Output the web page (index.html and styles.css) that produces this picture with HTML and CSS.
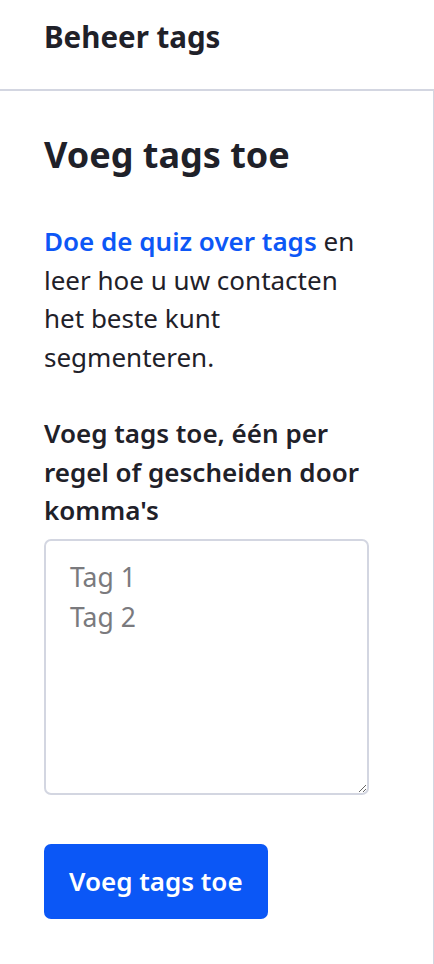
FILE: index.html
```html
<!DOCTYPE html>
<html lang="nl">
<head>
<meta charset="utf-8">
<title>Beheer tags</title>
<link rel="stylesheet" href="styles.css">
</head>
<body>
<header class="topbar">
  <h1 class="topbar-title">Beheer tags</h1>
</header>
<main class="panel">
  <h2 class="panel-title">Voeg tags toe</h2>
  <p class="intro"><a class="intro-link" href="#">Doe de quiz over tags</a> en leer hoe u uw contacten het beste kunt segmenteren.</p>
  <form class="tag-form">
    <label class="field-label" for="tags">Voeg tags toe, één per regel of gescheiden door komma's</label>
    <textarea class="field-input" id="tags" placeholder="Tag 1&#10;Tag 2"></textarea>
    <button class="btn-primary" type="button">Voeg tags toe</button>
  </form>
</main>
</body>
</html>
```
FILE: styles.css
```css
html, body {
  margin: 0;
  padding: 0;
  background: #ffffff;
}
body {
  font-family: "Noto Sans", "Open Sans", Arial, sans-serif;
  color: #1f2129;
  width: 434px;
  min-height: 964px;
  display: flex;
  flex-direction: column;
}
.topbar {
  height: 91px;
  box-sizing: border-box;
  border-bottom: 2px solid #d3d6e1;
  padding: 22px 44px 0 44px;
}
.topbar-title {
  margin: 0;
  font-size: 29.5px;
  font-weight: 700;
  line-height: 1;
}
.panel {
  flex: 1;
  border-right: 1px solid #d3d6e1;
  padding: 40px 44px 40px 44px;
}
.panel-title {
  margin: 0 0 44px 0;
  font-size: 36px;
  font-weight: 700;
  line-height: 47px;
}
.intro {
  margin: 0 0 37px 0;
  max-width: 322px;
  font-size: 26px;
  line-height: 38.7px;
}
.intro-link {
  color: #0d57f6;
  font-weight: 600;
  text-decoration: none;
}
.tag-form {
  display: flex;
  flex-direction: column;
  align-items: flex-start;
  max-width: 325px;
}
.field-label {
  font-size: 26px;
  font-weight: 600;
  line-height: 38.7px;
  margin-bottom: 9px;
}
.field-input {
  box-sizing: border-box;
  width: 325px;
  height: 256px;
  border: 2px solid #d3d6e1;
  border-radius: 7px;
  padding: 16px 24px;
  font-family: inherit;
  font-size: 26.5px;
  line-height: 40px;
  color: #1f2129;
  resize: vertical;
  margin: 0 0 49px 0;
}
.field-input::placeholder {
  color: #7a7a7e;
}
.btn-primary {
  background: #0b57f6;
  color: #ffffff;
  border: none;
  border-radius: 7px;
  height: 75px;
  padding: 0 25px;
  font-family: inherit;
  font-size: 26px;
  font-weight: 600;
}
```
